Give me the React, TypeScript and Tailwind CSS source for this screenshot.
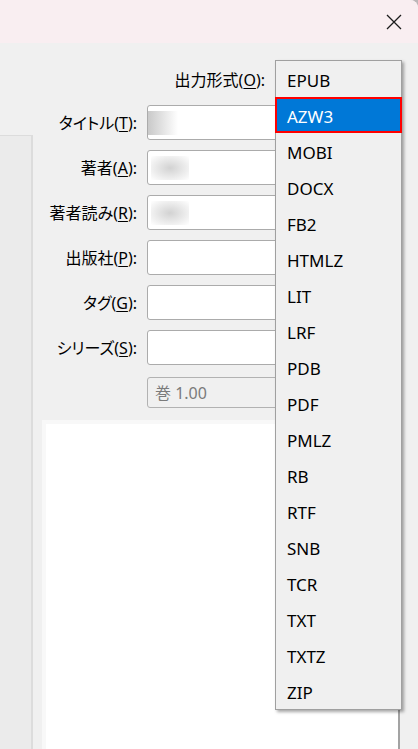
import React from "react";

const formats = [
  "EPUB", "AZW3", "MOBI", "DOCX", "FB2", "HTMLZ", "LIT", "LRF", "PDB",
  "PDF", "PMLZ", "RB", "RTF", "SNB", "TCR", "TXT", "TXTZ", "ZIP",
];

// label text, mnemonic letter, placeholder blur kind
const fields: { label: string; key: string; blur?: "left" | "round" }[] = [
  { label: "タイトル", key: "T", blur: "left" },
  { label: "著者", key: "A", blur: "round" },
  { label: "著者読み", key: "R", blur: "round" },
  { label: "出版社", key: "P" },
  { label: "タグ", key: "G" },
  { label: "シリーズ", key: "S" },
];

function Label({ text, k }: { text: string; k: string }) {
  return (
    <span className="text-[16px] text-black whitespace-nowrap">
      <span className="[font-feature-settings:'palt']">{text}</span>(
      <span className="underline underline-offset-2 decoration-1">{k}</span>):
    </span>
  );
}

function App() {
  return (
    <div
      className="w-[418px] h-[749px] bg-[#bdb7b9] overflow-hidden"
      style={{ fontFamily: '"Noto Sans", "Noto Sans CJK JP", sans-serif' }}
    >
      <div className="relative w-full h-full bg-[#f0f0f0] rounded-tr-[8px] overflow-hidden">
        {/* Title bar */}
        <div className="h-[43px] bg-[#f9eef1] flex items-center justify-end pr-[16px]">
          <svg width="16" height="16" viewBox="0 0 16 16" className="mt-[1px]">
            <path d="M1 1 L15 15 M15 1 L1 15" stroke="#1c1c1c" strokeWidth="1.3" />
          </svg>
        </div>

        {/* Output format row */}
        <div className="flex items-center h-[35px] mt-[19px]">
          <div className="w-[265px] flex justify-end">
            <Label text="出力形式" k="O" />
          </div>
        </div>

        <div className="flex mt-[8px]">
          {/* left side panel */}
          <div className="w-[33px] shrink-0 mt-[30px] h-[700px] bg-[#ebebeb] border-t border-r-2 border-[#dcdcdc]" />

          <div className="flex-1 pl-[9px] pr-[18px]">
            <div className="grid grid-cols-[95px_1fr] gap-x-[10px] gap-y-[10px]">
              {fields.map((f) => (
                <React.Fragment key={f.key}>
                  <div className="flex items-center justify-end h-[35px]">
                    <Label text={f.label} k={f.key} />
                  </div>
                  <div className="h-[35px] bg-white border border-[#ababab] rounded-[3px] flex items-center">
                    {f.blur === "left" && (
                      <div className="w-[30px] h-[24px] bg-linear-to-r from-[#c9c9c9] to-white" />
                    )}
                    {f.blur === "round" && (
                      <div className="w-[38px] h-[24px] ml-[3px] bg-radial from-[#d2d2d2] to-white" />
                    )}
                  </div>
                </React.Fragment>
              ))}
            </div>

            {/* volume spin box */}
            <div className="grid grid-cols-[95px_1fr] gap-x-[10px] mt-[12px]">
              <div />
              <div className="h-[31px] bg-[#f0f0f0] border border-[#b2b2b2] rounded-[3px] flex items-center pl-[7px] text-[16px] text-[#7b7b7b]">
                巻 1.00
              </div>
            </div>

            {/* comments area */}
            <div className="mt-[12px] h-[400px] bg-white border-l-4 border-t-4 border-[#f8f8f8] border-r-2 border-r-[#a3a3a3]" />
          </div>
        </div>

        {/* open dropdown list */}
        <div className="absolute left-[275px] top-[60px] w-[127px] bg-[#f0f0f0] border border-[#a0a0a0] shadow-[2px_2px_3px_rgba(0,0,0,0.35)]">
          {formats.map((f) =>
            f === "AZW3" ? (
              <div
                key={f}
                className="-mx-px h-[36px] flex items-center pl-[10px] pt-[3px] bg-[#0078d7] text-white text-[17px] border-2 border-[#ff0000]"
              >
                {f}
              </div>
            ) : (
              <div key={f} className="h-[36px] flex items-center pl-[11px] pt-[4px] text-[17px] text-black">
                {f}
              </div>
            )
          )}
        </div>
      </div>
    </div>
  );
}

export default App;
